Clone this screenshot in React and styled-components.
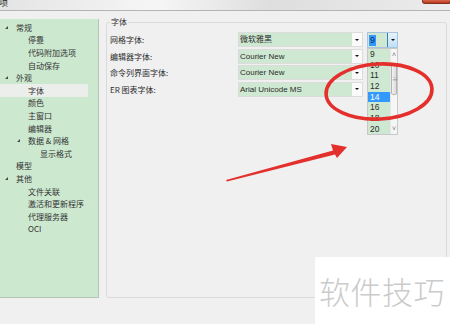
import React from 'react';
import styled, { createGlobalStyle } from 'styled-components';

const GlobalStyle = createGlobalStyle`
  html, body {
    margin: 0;
    padding: 0;
    background: #f0f0f0;
  }
  body {
    font-family: "Noto Sans CJK SC", "Liberation Sans", sans-serif;
    color: #2b2b2b;
  }
`;

const treeItems = [
  { text: '常规', level: 0, open: true },
  { text: '停靠', level: 1 },
  { text: '代码附加选项', level: 1 },
  { text: '自动保存', level: 1 },
  { text: '外观', level: 0, open: true },
  { text: '字体', level: 1, selected: true },
  { text: '颜色', level: 1 },
  { text: '主窗口', level: 1 },
  { text: '编辑器', level: 1 },
  { text: '数据 & 网格', level: 1, open: true },
  { text: '显示格式', level: 2 },
  { text: '模型', level: 0 },
  { text: '其他', level: 0, open: true },
  { text: '文件关联', level: 1 },
  { text: '激活和更新程序', level: 1 },
  { text: '代理服务器', level: 1 },
  { text: 'OCI', level: 1 },
];

const fontRows = [
  { label: '网格字体:', value: '微软雅黑' },
  { label: '编辑器字体:', value: 'Courier New' },
  { label: '命令列界面字体:', value: 'Courier New' },
  { label: 'ER 图表字体:', value: 'Arial Unicode MS' },
];

const sizes = ['9', '10', '11', '12', '14', '16', '18', '20'];

function App() {
  return (
    <Window>
      <GlobalStyle />
      <TitleBar>
        <TitleText>项</TitleText>
        <CloseButton />
      </TitleBar>
      <Body>
        <Tree>
          {treeItems.map((item, i) => (
            <TreeRow key={i} level={item.level} selected={item.selected}>
              <Toggle>{item.open && <Expanded />}</Toggle>
              {item.text}
            </TreeRow>
          ))}
        </Tree>
        <Group>
          <Legend>字体</Legend>
          <FontGrid>
            {fontRows.map((row, i) => (
              <React.Fragment key={i}>
                <Label>{row.label}</Label>
                <Combo>
                  <ComboText>{row.value}</ComboText>
                  <ComboButton><DownArrow /></ComboButton>
                </Combo>
                {i === 0 ? (
                  <SizeCombo>
                    <SizeText><Highlight>9</Highlight></SizeText>
                    <SizeButton><DownArrow /></SizeButton>
                    <DropList>
                      <Options>
                        {sizes.map((s) => (
                          <Option key={s} selected={s === '14'}>{s}</Option>
                        ))}
                      </Options>
                      <ScrollBar>
                        <ScrollArrow>˄</ScrollArrow>
                        <Thumb>≡</Thumb>
                        <ScrollSpace />
                        <ScrollArrow>˅</ScrollArrow>
                      </ScrollBar>
                    </DropList>
                  </SizeCombo>
                ) : <span />}
              </React.Fragment>
            ))}
          </FontGrid>
        </Group>
      </Body>
      <Marks width="450" height="324" viewBox="0 0 450 324">
        <ellipse cx="379" cy="91.5" rx="53" ry="27.5" fill="none" stroke="#e4302c" strokeWidth="3.6" transform="rotate(-3 379 91.5)" />
        <polygon points="226,180 333,150.5 331,144 347,147 337,158 335,154.5 227,181.5" fill="#e4302c" />
      </Marks>
      <Watermark>软件技巧</Watermark>
    </Window>
  );
}

const Window = styled.div`
  position: relative;
  width: 450px;
  height: 324px;
  overflow: hidden;
  background: #f0f0f0;
`;

const TitleBar = styled.div`
  height: 10px;
  display: flex;
  justify-content: space-between;
  align-items: flex-start;
  overflow: hidden;
  border-bottom: 1px solid #b4b4b4;
  background: linear-gradient(100deg, #e4e4e4 0%, #f6f6f6 35%, #dedede 60%, #ececec 100%);
`;

const TitleText = styled.span`
  font-size: 9px;
  line-height: 10px;
  margin: -2px 0 0 -1px;
  color: #222;
`;

const CloseButton = styled.div`
  width: 27px;
  height: 3px;
  margin-right: -1px;
  background: linear-gradient(#d8684e, #b9371f);
  border: 1px solid #84301f;
  border-top: none;
  border-radius: 0 0 3px 3px;
`;

const Body = styled.div`
  display: flex;
  align-items: flex-start;
  padding-top: 6px;
`;

const Tree = styled.ul`
  list-style: none;
  margin: 2px 0 0;
  padding: 2px 10px 0 0;
  width: 88px;
  height: 276px;
  background: #cce8cf;
  border-right: 1px solid #b4c4b5;
  border-bottom: 1px solid #b4c4b5;
`;

const TreeRow = styled.li`
  display: flex;
  align-items: center;
  height: 12.6px;
  padding-left: ${(p) => 4 + p.level * 12}px;
  font-size: 8px;
  white-space: nowrap;
  color: #333;
  background: ${(p) => (p.selected ? '#eceeec' : 'transparent')};
`;

const Toggle = styled.span`
  width: 12px;
  display: flex;
  align-items: center;
`;

const Expanded = styled.span`
  width: 0;
  height: 0;
  border-left: 3px solid transparent;
  border-bottom: 3px solid #4a4a4a;
  margin-left: 1px;
`;

const Group = styled.fieldset`
  box-sizing: border-box;
  margin: 0 0 0 7px;
  padding: 5px 3px 0;
  width: 341px;
  height: 281px;
  min-width: 0;
  border: 1px solid #dadada;
  border-radius: 3px;
`;

const Legend = styled.legend`
  font-size: 8px;
  line-height: 10px;
  padding: 0 1px;
  color: #333;
`;

const FontGrid = styled.div`
  display: grid;
  grid-template-columns: 124px 125px 31px;
  grid-auto-rows: 15px;
  column-gap: 4px;
  row-gap: 1.5px;
`;

const Label = styled.span`
  align-self: center;
  font-size: 8px;
  color: #2b2b2b;
  white-space: nowrap;
`;

const Combo = styled.div`
  box-sizing: border-box;
  display: flex;
  height: 15px;
  border: 1px solid #dcdcdc;
  background: #fafafa;
`;

const ComboText = styled.span`
  flex: 1;
  padding-left: 1px;
  background: #cfe8d1;
  font-family: "Liberation Sans", "Noto Sans CJK SC", sans-serif;
  font-size: 8px;
  line-height: 13px;
  color: #2b2b2b;
`;

const ComboButton = styled.span`
  width: 10px;
  display: flex;
  align-items: center;
  justify-content: center;
`;

const DownArrow = styled.span`
  width: 0;
  height: 0;
  border-left: 2px solid transparent;
  border-right: 2px solid transparent;
  border-top: 2.5px solid #111;
`;

const SizeCombo = styled.div`
  position: relative;
  box-sizing: border-box;
  display: flex;
  height: 16px;
  border: 1px solid #a8c4de;
  background: #cfe8d1;
`;

const SizeText = styled.span`
  flex: 1;
  display: flex;
  align-items: center;
  padding-left: 1px;
`;

const Highlight = styled.span`
  width: 7px;
  height: 11px;
  background: #3399ff;
  color: #0d2f6e;
  font-family: "Liberation Sans", sans-serif;
  font-size: 9px;
  line-height: 11px;
  text-align: center;
`;

const SizeButton = styled.span`
  width: 9px;
  display: flex;
  align-items: center;
  justify-content: center;
  border-left: 1px solid #3c7fb1;
  background: linear-gradient(#e6f3fb, #bfe0f6);
`;

const DropList = styled.div`
  position: absolute;
  top: 15px;
  left: -1px;
  box-sizing: border-box;
  width: 31px;
  height: 87px;
  display: flex;
  border: 1px solid #c8c8c8;
  background: #fff;
  z-index: 2;
`;

const Options = styled.div`
  width: 22px;
  background: #cfe8d1;
`;

const Option = styled.div`
  height: 10.7px;
  padding-left: 2px;
  font-family: "Liberation Sans", sans-serif;
  font-size: 8.5px;
  line-height: 10.7px;
  color: ${(p) => (p.selected ? '#fff' : '#2b2b2b')};
  background: ${(p) => (p.selected ? '#3399ff' : 'transparent')};
`;

const ScrollBar = styled.div`
  flex: 1;
  display: flex;
  flex-direction: column;
  align-items: center;
  background: #f6f6f6;
  border-left: 1px solid #e6e6e6;
`;

const ScrollArrow = styled.span`
  height: 11px;
  font-size: 7px;
  line-height: 11px;
  color: #777;
`;

const Thumb = styled.span`
  width: 6px;
  height: 32px;
  margin-top: 3px;
  box-sizing: border-box;
  border: 1px solid #b5b5b5;
  border-radius: 2px;
  background: linear-gradient(90deg, #f2f2f2, #dcdcdc);
  font-size: 6px;
  line-height: 30px;
  color: #888;
  text-align: center;
`;

const ScrollSpace = styled.span`
  flex: 1;
`;

const Marks = styled.svg`
  position: absolute;
  left: 0;
  top: 0;
  pointer-events: none;
  z-index: 3;
`;

const Watermark = styled.div`
  position: absolute;
  right: 0;
  bottom: 0;
  width: 135px;
  height: 67px;
  box-sizing: border-box;
  padding-left: 4px;
  display: flex;
  align-items: center;
  background: #fff;
  color: #cbcbcb;
  font-family: "Noto Sans CJK SC", sans-serif;
  font-weight: 300;
  font-size: 31px;
  letter-spacing: 0.5px;
  z-index: 4;
`;

export default App;
